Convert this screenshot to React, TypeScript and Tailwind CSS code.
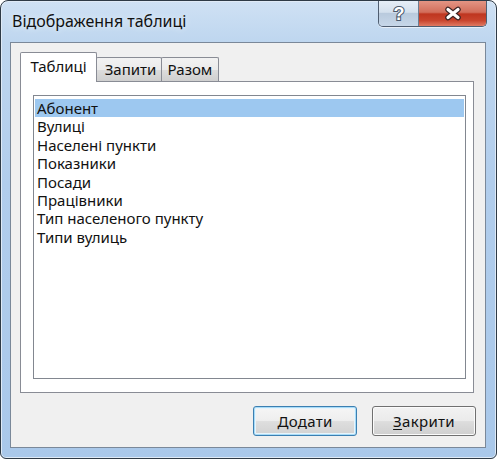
import React from 'react';

const tables = [
  'Абонент',
  'Вулиці',
  'Населені пункти',
  'Показники',
  'Посади',
  'Працівники',
  'Тип населеного пункту',
  'Типи вулиць',
];

const font = { fontFamily: '"Noto Sans", "DejaVu Sans", sans-serif' };

const CloseGlyph = () => (
  <svg width="20" height="15" viewBox="0 0 20 15">
    <path d="M5 3.5 L15 11.5 M15 3.5 L5 11.5" stroke="#3b2424" strokeWidth="5.5" strokeLinecap="round" fill="none" />
    <path d="M5 3.5 L15 11.5 M15 3.5 L5 11.5" stroke="#ffffff" strokeWidth="3.2" strokeLinecap="round" fill="none" />
  </svg>
);

const HelpGlyph = () => (
  <svg width="16" height="20" viewBox="0 0 16 20">
    <text
      x="8"
      y="16"
      textAnchor="middle"
      fontSize="18"
      fontWeight="bold"
      fontFamily="Liberation Sans, Arial, sans-serif"
      fill="#ffffff"
      stroke="#4a5a6e"
      strokeWidth="2.2"
      paintOrder="stroke"
    >
      ?
    </text>
  </svg>
);

export default function App() {
  return (
    <div className="w-[497px] h-[459px] bg-white" style={font}>
      <div className="w-[497px] h-[459px] flex flex-col rounded-t-[8px] rounded-b-[6px] border border-[#2e3a46] bg-[linear-gradient(180deg,#cfe1f4_0%,#bed6ef_9%,#b1cdec_40%,#a9c8ea_100%)] shadow-[inset_0_0_0_1px_#dfeaf6] overflow-hidden">
        {/* Title bar */}
        <div className="h-[41px] shrink-0 flex items-start justify-between pl-[11px] pr-[9px]">
          <div className="pt-[10px] text-[16px] leading-[20px] text-[#111] [text-shadow:0_0_6px_#eef5fc]">
            Відображення таблиці
          </div>
          <div className="flex rounded-b-[5px] border border-t-0 border-[#4f5d70] overflow-hidden shadow-[0_1px_0_#e6eef8]">
            <div className="w-[40px] h-[25px] flex items-center justify-center border-r border-[#6b7c90] bg-[linear-gradient(180deg,#e6eef7_0%,#d4e0ed_45%,#b9cadd_50%,#c7d7e9_100%)]">
              <HelpGlyph />
            </div>
            <div className="w-[67px] h-[25px] flex items-center justify-center bg-[linear-gradient(180deg,#e39584_0%,#d26e5b_45%,#bf3620_52%,#c9452e_78%,#e07a63_100%)]">
              <CloseGlyph />
            </div>
          </div>
        </div>

        {/* Client area */}
        <div className="flex-1 pl-[9px] pr-[10px] pb-[10px]">
          <div className="h-full border border-[#7a8899] bg-[#f0f0f0] flex flex-col pl-[9px] pt-[9px]">
            {/* Tabs */}
            <div className="h-[29px] flex items-end text-[15px] text-[#111]">
              <div className="relative z-10 w-[77px] h-[30px] -mb-px flex items-center justify-center border border-b-0 border-[#898c95] bg-white rounded-t-[2px] pb-[2px]">
                Таблиці
              </div>
              <div className="w-[66px] h-[24px] -ml-px flex items-center justify-center border border-b-0 border-[#898c95] bg-[linear-gradient(180deg,#f2f2f2_0%,#ebebeb_50%,#dddddd_51%,#cfcfcf_100%)] rounded-t-[2px] pl-[3px]">
                Запити
              </div>
              <div className="w-[58px] h-[24px] -ml-px flex items-center justify-center border border-b-0 border-[#898c95] bg-[linear-gradient(180deg,#f2f2f2_0%,#ebebeb_50%,#dddddd_51%,#cfcfcf_100%)] rounded-t-[2px]">
                Разом
              </div>
            </div>

            {/* Tab panel */}
            <div className="w-[454px] h-[312px] border border-[#898c95] bg-white pl-[12px] pt-[13px]">
              <div className="w-[433px] h-[284px] border border-[#828790] bg-white pt-[3px] px-[1px]">
                {tables.map((t, i) => (
                  <div
                    key={t}
                    className={`h-[18.4px] leading-[18px] pl-[2px] text-[15px] text-[#111] ${i === 0 ? 'bg-[#9dc8f0]' : ''}`}
                  >
                    {t}
                  </div>
                ))}
              </div>
            </div>

            {/* Buttons */}
            <div className="w-[456px] mt-[13px] flex justify-end gap-[15px] text-[15px] tracking-[0.3px] text-[#111]">
              <button className="w-[104px] h-[30px] rounded-[3px] border border-[#3c7fb1] shadow-[inset_0_0_0_1px_#a8dcf8,inset_0_0_0_2px_#e8f4fb] bg-[linear-gradient(180deg,#f6f6f6_0%,#eeeeee_48%,#dedede_52%,#d2d2d2_100%)]">
                Додати
              </button>
              <button className="w-[104px] h-[30px] rounded-[3px] border border-[#707070] shadow-[inset_0_0_0_1px_#fbfbfb] bg-[linear-gradient(180deg,#f2f2f2_0%,#ebebeb_48%,#dddddd_52%,#cfcfcf_100%)]">
                <span className="underline underline-offset-2">З</span>акрити
              </button>
            </div>
          </div>
        </div>
      </div>
    </div>
  );
}
